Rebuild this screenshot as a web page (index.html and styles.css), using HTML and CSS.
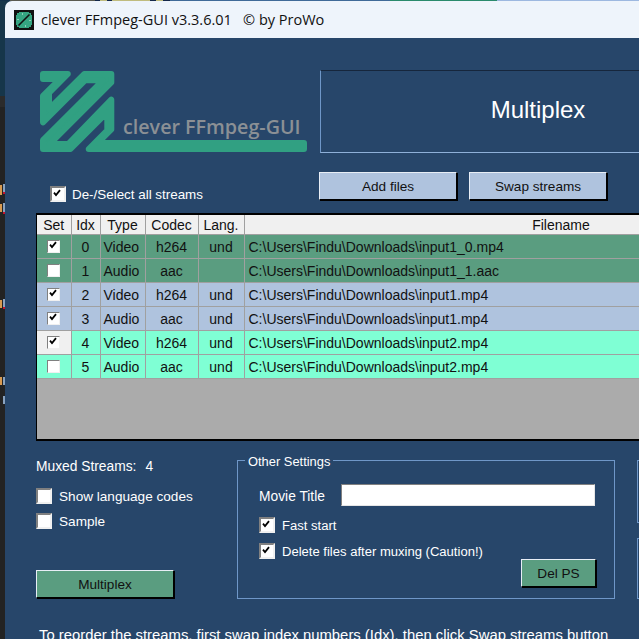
FILE: index.html
```html
<!DOCTYPE html>
<html lang="en">
<head>
<meta charset="utf-8">
<title>clever FFmpeg-GUI</title>
<link rel="stylesheet" href="styles.css">
</head>
<body>
<svg class="defs" width="0" height="0" aria-hidden="true">
  <symbol id="tick" viewBox="0 0 8 8"><path d="M1 3.6 L3 6 L7 1.2" fill="none" stroke="#000" stroke-width="1.8"/></symbol>
</svg>
<div class="desktop">
  <div class="window">
    <header class="titlebar">
      <svg class="appicon" viewBox="0 0 20 20" width="20" height="20">
        <rect width="20" height="20" fill="#111"/>
        <rect x="2" y="2" width="16" height="16" fill="#35a582"/>
        <path d="M4.5 15.5 L15.5 4.5" stroke="#111" stroke-width="1.6"/>
        <path d="M2 2h3v1h-2v2h-1zM18 18h-3v-1h2v-2h1zM15 2h3v3h-1v-2h-2zM2 15h1v2h2v1h-3z" fill="#111"/>
        <path d="M8 4h1M11 16h1M4 9v1M16 10v1" stroke="#e6f5ef" stroke-width="1"/>
      </svg>
      <span class="titletext">clever FFmpeg-GUI v3.3.6.01&nbsp;&nbsp;&nbsp;© by ProWo</span>
    </header>
    <main class="client">
      <section class="top">
        <svg class="logo" viewBox="0 0 284 83" width="284" height="83">
          <path class="snake" transform="translate(-36 -70)" d="M43 74 H67.8 L49 92.8 V109.2 L84.2 74 H111.3 V82.5 L49.8 144 H68.2 L111.3 99.7 V129.5 L97.8 143 H304 V149 H88.7 L107.3 130.4 V112.2 L70.5 149 H43 V140.2 L102.9 80.3 H85 L43 122.3 V95.9 L59.9 79 H43 Z"/>
          <text class="logotext" x="87" y="64">clever FFmpeg-GUI</text>
        </svg>
        <div class="banner">Multiplex</div>
      </section>

      <section class="actions">
        <label class="selectall"><span class="chk big on"><svg><use href="#tick"/></svg></span>De-/Select all streams</label>
        <div class="actionbtns">
          <button class="btn blue">Add files</button>
          <button class="btn blue">Swap streams</button>
        </div>
      </section>

      <section class="tablewrap">
        <table class="streams">
          <colgroup><col class="c1"><col class="c2"><col class="c3"><col class="c4"><col class="c5"><col class="c6"></colgroup>
          <thead><tr><th>Set</th><th>Idx</th><th>Type</th><th>Codec</th><th>Lang.</th><th>Filename</th></tr></thead>
          <tbody>
            <tr class="green"><td><span class="chk on"><svg><use href="#tick"/></svg></span></td><td>0</td><td class="l">Video</td><td>h264</td><td>und</td><td class="l path">C:\Users\Findu\Downloads\input1_0.mp4</td></tr>
            <tr class="green"><td><span class="chk"></span></td><td>1</td><td class="l">Audio</td><td>aac</td><td></td><td class="l path">C:\Users\Findu\Downloads\input1_1.aac</td></tr>
            <tr class="blue"><td><span class="chk on"><svg><use href="#tick"/></svg></span></td><td>2</td><td class="l">Video</td><td>h264</td><td>und</td><td class="l path">C:\Users\Findu\Downloads\input1.mp4</td></tr>
            <tr class="blue"><td><span class="chk on"><svg><use href="#tick"/></svg></span></td><td>3</td><td class="l">Audio</td><td>aac</td><td>und</td><td class="l path">C:\Users\Findu\Downloads\input1.mp4</td></tr>
            <tr class="aqua"><td class="focus"><span class="chk on"><svg><use href="#tick"/></svg></span></td><td>4</td><td class="l">Video</td><td>h264</td><td>und</td><td class="l path">C:\Users\Findu\Downloads\input2.mp4</td></tr>
            <tr class="aqua"><td><span class="chk"></span></td><td>5</td><td class="l">Audio</td><td>aac</td><td>und</td><td class="l path">C:\Users\Findu\Downloads\input2.mp4</td></tr>
          </tbody>
        </table>
      </section>

      <section class="lower">
        <div class="leftcol">
          <div class="muxed"><span>Muxed Streams:</span><span>4</span></div>
          <label class="opt"><span class="chk big"></span>Show language codes</label>
          <label class="opt"><span class="chk big"></span>Sample</label>
          <button class="btn green wide">Multiplex</button>
        </div>
        <fieldset class="group">
          <legend>Other Settings</legend>
          <div class="titlerow"><span>Movie Title</span><span class="field"></span></div>
          <label class="opt"><span class="chk big on"><svg><use href="#tick"/></svg></span>Fast start</label>
          <label class="opt"><span class="chk big on"><svg><use href="#tick"/></svg></span>Delete files after muxing (Caution!)</label>
          <div class="delrow"><button class="btn green small">Del PS</button></div>
        </fieldset>
        <div class="rightcol">
          <div class="sidebox first"></div>
          <div class="sidebox"></div>
        </div>
      </section>

      <p class="hint">To reorder the streams, first swap index numbers (Idx), then click Swap streams button</p>
    </main>
  </div>
</div>
</body>
</html>
```
FILE: styles.css
```css
* { box-sizing: border-box; }
html, body { margin: 0; padding: 0; width: 639px; height: 639px; overflow: hidden; }
body { font-family: "Liberation Sans", Arial, sans-serif; font-size: 13px; color: #fff; background: #1c1f24; }
.defs { position: absolute; }
.desktop {
  width: 639px; height: 639px; overflow: hidden; padding: 1px 0 0 5px;
  background-color: #232323;
  background-image:
    linear-gradient(to right, #12304a 0 10px, #5a5a50 10px 95px, #14284a 95px 100px, #c0bc7e 100px 107px, #14284a 107px 112px, #c0bc7e 112px 150px, #14284a 150px 156px, #c0bc7e 156px 163px, #14284a 163px 170px, #3f6a98 170px 390px, #2a8a6c 390px 497px, #9db8e0 497px),
    linear-gradient(to bottom, transparent 185px, #d89a50 185px 195px, transparent 195px 204px, #d89a50 204px 212px, transparent 212px 300px, #d89a50 300px 308px, transparent 308px 377px, #d89a50 377px 385px, transparent 385px),
    linear-gradient(to bottom, transparent 184px, #8aa3bf 184px 192px, #c8122c 192px 194px, transparent 194px 203px, #8aa3bf 203px 212px, #c8122c 212px 214px, transparent 214px 299px, #8aa3bf 299px 307px, #c8122c 307px 309px, transparent 309px 377px, #8aa3bf 377px 385px, transparent 385px 396px, #8aa3bf 396px 404px, transparent 404px),
    linear-gradient(to bottom, #16364a 0 96px, #2b2b2b 96px 107px, #232323 107px);
  background-size: 100% 1px, 2px 100%, 2px 100%, 100% 100%;
  background-position: 0 0, 0 0, 3px 0, 0 0;
  background-repeat: no-repeat;
}
.window { width: 900px; height: 800px; background: #27466a; border-top-left-radius: 7px; overflow: hidden; }
.titlebar { height: 37px; background: #eef4fb; display: flex; align-items: center; padding-left: 9px; gap: 7px; color: #111; }
.appicon { flex: none; }
.titletext { font-family: "Open Sans", sans-serif; font-size: 14.5px; white-space: nowrap; }
.client { padding: 32px 0 0 31px; }

.top { display: flex; height: 83px; }
.logo { flex: none; display: block; overflow: hidden; }
.snake { fill: #31a082; stroke: #31a082; stroke-width: 6; stroke-linejoin: round; }
.logotext { font-family: "Open Sans", sans-serif; font-weight: 600; font-size: 19.7px; fill: #8b9095; }
.banner { flex: none; width: 436px; height: 83px; padding-bottom: 4px; border: 1px solid; border-color: #16263c #6f97c8 #8fb0d8 #6f97c8; display: flex; align-items: center; justify-content: center; font-size: 24px; }

.actions { display: flex; height: 29px; margin-top: 19px; }
.selectall { display: flex; align-items: center; gap: 6px; width: 283px; padding: 2px 0 0 14px; white-space: nowrap; height: 44px; margin-top: -1px; font-size: 13.4px; }
.actionbtns { display: flex; gap: 12px; }

.btn { display: block; padding: 0; font: inherit; font-size: 13.6px; color: #111; border: 1px solid; border-color: #e8eef6 #000 #000 #e8eef6; box-shadow: 1px 1px 0 #000; }
.btn.blue { width: 138px; height: 28px; background: #afc3de; }
.btn.green { background: #5a9d80; }
.btn.wide { width: 138px; height: 28px; margin-top: 41px; }
.btn.small { width: 75px; height: 28px; }

.tablewrap { margin-top: 12px; width: 900px; height: 228px; background: #ababab; border: 1px solid #000; border-width: 2px 1px; }
.streams { border-collapse: collapse; table-layout: fixed; width: 841px; color: #111; font-size: 14px; }
.c1 { width: 34px; } .c2 { width: 29px; } .c3 { width: 45px; } .c4 { width: 53px; } .c5 { width: 46px; }
.streams th { height: 19px; padding: 1px 0 0; font-weight: normal; background: #f0f0f0; text-align: center; border-right: 1px solid #a0a0a0; }
.streams th:last-child { border-right: 0; }
.streams td { height: 24px; padding: 1px 0 0; text-align: center; border: 1px solid #a0a0a0; border-width: 1px 1px 1px 0; }
.streams td.l { text-align: left; padding-left: 3px; }
.streams td.path { padding-left: 4px; }
tr.green td { background: #5a9d80; }
tr.blue td { background: #afc3de; }
tr.aqua td { background: #7fffd4; }
tr.aqua td.focus { background: #f0f0f0; }

.chk { display: inline-block; flex: none; width: 13px; height: 13px; background: #fff; border: 1px solid; border-color: #808080 #f0f0f0 #f0f0f0 #808080; vertical-align: middle; }
.streams .chk { margin-top: -2px; }
.chk svg { display: block; width: 8px; height: 8px; margin: 0 0 0 1px; }
.chk.big { width: 16px; height: 16px; border-width: 2px; border-color: #808080 #f0f0f0 #f0f0f0 #808080; }
.chk.big svg { margin: 1px 0 0 1px; }

.lower { display: flex; margin-top: 19px; height: 139px; }
.leftcol { width: 201px; flex: none; }
.muxed { display: flex; gap: 9px; height: 14px; align-items: center; margin: -1px 0 15px; font-size: 13.8px; }
.opt { display: flex; align-items: center; gap: 7px; height: 16px; margin-bottom: 9px; white-space: nowrap; font-size: 13.6px; }
.group { width: 378px; height: 148px; flex: none; margin: -9px 0 0; padding: 15px 18px 0 21px; border: 1px solid #6f97c8; min-width: 0; }
.group legend { padding: 4px 3px 0; margin-left: -14px; line-height: 14px; font-size: 12.9px; }
.group .opt { margin-bottom: 10px; font-size: 13.05px; }
.titlerow { display: flex; align-items: center; height: 22px; margin-bottom: 11px; font-size: 13.8px; }
.titlerow span:first-child { width: 82px; padding-top: 3px; }
.field { width: 254px; height: 22px; background: #fff; border: 1px solid; border-color: #808080 #e6e6e6 #e6e6e6 #808080; }
.delrow { display: flex; justify-content: flex-end; margin-top: -10px; }
.rightcol { margin-left: 22px; display: flex; flex-direction: column; gap: 15px; }
.sidebox { width: 200px; height: 62px; border: 1px solid #6f97c8; }
.sidebox.first { height: 63px; }
.hint { margin: 28px 0 0 3px; white-space: nowrap; font-size: 14.85px; line-height: 17px; }
```
